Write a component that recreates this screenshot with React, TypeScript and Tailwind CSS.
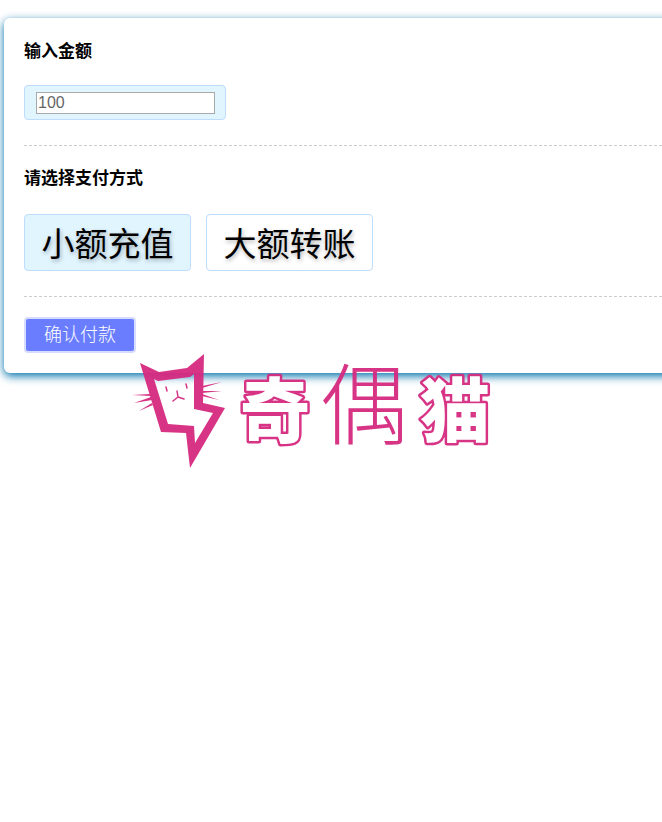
import { useState } from "react";

interface PayMethod {
  id: string;
  label: string;
}

const payMethods: PayMethod[] = [
  { id: "small", label: "小额充值" },
  { id: "large", label: "大额转账" },
];

function CatMark() {
  return (
    <svg viewBox="0 0 94 118" className="h-[118px] w-[94px]" fill="none" aria-hidden="true">
      <path
        fill="#d62a80"
        fillRule="evenodd"
        d="M8 10 L27 19 L55 15 L72 1 L71 50 L93 55 L58 115 L54 80 L29 79 Z M22 26 L36 71 L62 73 L63 90 L81 60 L62 56 L62 21 L58 24 L26 28 Z"
      />
      <g fill="#d62a80">
        <path d="M70 35 L90 29 L70 33 Z M70 38 L90 38 L70 40 Z M70 43 L87 47 L70 41 Z" />
        <path d="M18 41 L0 42 L19 43 Z M19 44 L2 50 L20 47 Z M20 50 L7 58 L21 52 Z" />
      </g>
      <path
        stroke="#d62a80"
        strokeWidth="1.5"
        strokeLinecap="round"
        d="M34 34 L35 38 M54 31 L55 35 M45 38 L46 44 L41 48 M46 44 L52 46"
      />
    </svg>
  );
}

function Logo() {
  return (
    <div className="pointer-events-none absolute top-[353px] left-[132px] flex opacity-95">
      <CatMark />
      <svg
        viewBox="0 0 276 140"
        className="-mt-2 h-[140px] w-[276px] overflow-visible font-['Noto_Sans_CJK_SC',sans-serif]"
        fill="#d62a80"
        textAnchor="middle"
      >
        <g
          fill="#ffffff"
          stroke="#d62a80"
          strokeWidth="5"
          strokeLinejoin="round"
          className="text-[70px] font-black"
          style={{ paintOrder: "stroke" }}
        >
          <text x="49" y="92">奇</text>
          <text x="229" y="92">猫</text>
        </g>
        <text x="138" y="92" className="text-[88px] font-light">偶</text>
      </svg>
    </div>
  );
}

export default function App() {
  const [amount, setAmount] = useState("100");
  const [method, setMethod] = useState("small");

  return (
    <div className="relative min-h-screen overflow-hidden bg-white pt-[18px] pl-1 font-['Liberation_Sans','Noto_Sans_CJK_SC',sans-serif] text-black">
      <form
        className="-mr-5 rounded-md bg-white px-5 pt-5 pb-5 shadow-[0_3px_10px_#0070aa]"
        onSubmit={(e) => e.preventDefault()}
      >
        <label htmlFor="amount" className="block text-[17px] leading-7 font-bold">
          输入金额
        </label>
        <div className="mt-[19px] flex h-[35px] w-[202px] items-center rounded border border-[#bddcff] bg-[#e1f5ff] pr-2.5 pl-[11px]">
          <input
            id="amount"
            type="text"
            value={amount}
            onChange={(e) => setAmount(e.target.value)}
            className="h-[22px] w-full border border-[#a9a9a9] bg-white px-px text-base text-[#666666] outline-none"
          />
        </div>

        <div className="mt-[25px] border-t border-dashed border-[#cccccc]" />

        <h2 className="mt-[19px] text-[17px] leading-7 font-bold">请选择支付方式</h2>
        <div className="mt-[21px] flex gap-[15px]">
          {payMethods.map((item) => (
            <button
              key={item.id}
              type="button"
              aria-pressed={method === item.id}
              onClick={() => setMethod(item.id)}
              className={`h-[57px] w-[167px] rounded border border-[#bddcff] pt-1 text-[33px] leading-none text-shadow-[1px_2px_4px_#00000050] ${
                method === item.id ? "bg-[#e1f5ff]" : "bg-white"
              }`}
            >
              {item.label}
            </button>
          ))}
        </div>

        <div className="mt-[25px] border-t border-dashed border-[#cccccc]" />

        <button
          type="submit"
          className="mt-5 block h-9 w-28 rounded border-2 border-[#d6dcff] bg-[#6a7dfe] text-lg leading-none font-light text-white"
        >
          确认付款
        </button>
      </form>
      <Logo />
    </div>
  );
}
